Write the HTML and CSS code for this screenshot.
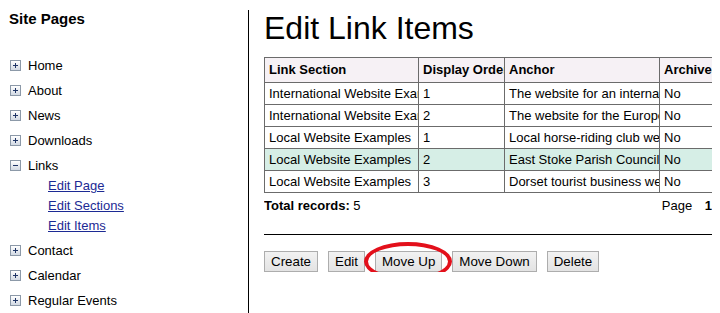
FILE: index.html
```html
<!DOCTYPE html>
<html lang="en">
<head>
    <meta charset="UTF-8">
    <title>Edit Link Items</title>
    <link rel="stylesheet" href="styles.css">
</head>
<body>
    <div class="page">
        <div class="sidebar">
            <div class="sidebar-title">Site Pages</div>
            <ul class="menu">
                <li><span class="toggle plus"></span>Home</li>
                <li><span class="toggle plus"></span>About</li>
                <li><span class="toggle plus"></span>News</li>
                <li><span class="toggle plus"></span>Downloads</li>
                <li><span class="toggle minus"></span>Links
                    <ul class="submenu">
                        <li><a href="#">Edit Page</a></li>
                        <li><a href="#">Edit Sections</a></li>
                        <li><a href="#">Edit Items</a></li>
                    </ul>
                </li>
                <li><span class="toggle plus"></span>Contact</li>
                <li><span class="toggle plus"></span>Calendar</li>
                <li><span class="toggle plus"></span>Regular Events</li>
            </ul>
        </div>

        <div class="main">
            <h1 class="title">Edit Link Items</h1>
            <table class="grid">
                <colgroup>
                    <col class="col-section">
                    <col class="col-order">
                    <col class="col-anchor">
                    <col class="col-archive">
                </colgroup>
                <tr class="head">
                    <th>Link Section</th>
                    <th>Display Order</th>
                    <th>Anchor</th>
                    <th>Archived</th>
                </tr>
                <tr>
                    <td>International Website Examples</td>
                    <td>1</td>
                    <td>The website for an international charity</td>
                    <td>No</td>
                </tr>
                <tr>
                    <td>International Website Examples</td>
                    <td>2</td>
                    <td>The website for the European federation</td>
                    <td>No</td>
                </tr>
                <tr>
                    <td>Local Website Examples</td>
                    <td>1</td>
                    <td>Local horse-riding club website</td>
                    <td>No</td>
                </tr>
                <tr class="selected">
                    <td>Local Website Examples</td>
                    <td>2</td>
                    <td>East Stoke Parish Council</td>
                    <td>No</td>
                </tr>
                <tr>
                    <td>Local Website Examples</td>
                    <td>3</td>
                    <td>Dorset tourist business website</td>
                    <td>No</td>
                </tr>
            </table>

            <div class="pager">
                <div><b>Total records:</b> 5</div>
                <div class="page-no">Page <b>1</b></div>
            </div>

            <hr class="rule">

            <div class="actions">
                <button class="btn">Create</button>
                <button class="btn">Edit</button>
                <span class="marked"><button class="btn">Move Up</button></span>
                <button class="btn">Move Down</button>
                <button class="btn">Delete</button>
            </div>
        </div>
    </div>
</body>
</html>
```

FILE: styles.css
```css
body {
    margin: 0;
    font-family: "Liberation Sans", Arial, sans-serif;
    font-size: 13px;
    color: #000;
    background: #fff;
    overflow: hidden;
}
.page {
    display: flex;
    align-items: flex-start;
}
.sidebar {
    width: 239px;
    padding-left: 9px;
    margin-top: 10px;
    min-height: 303px;
    border-right: 1px solid #000;
}
.sidebar-title {
    font-weight: bold;
    font-size: 15px;
    line-height: 17px;
}
.menu {
    list-style: none;
    margin: 29px 0 0 0;
    padding: 0;
}
.menu > li {
    line-height: 20px;
    margin-bottom: 5px;
}
.toggle {
    display: inline-block;
    width: 9px;
    height: 9px;
    border: 1px solid #8c99a8;
    background: linear-gradient(#ffffff, #d2d9e3);
    margin: 0 7px 0 1px;
    vertical-align: -1px;
    position: relative;
}
.toggle::before {
    content: "";
    position: absolute;
    left: 2px;
    top: 4px;
    width: 5px;
    height: 1px;
    background: #1f3566;
}
.toggle.plus::after {
    content: "";
    position: absolute;
    left: 4px;
    top: 2px;
    width: 1px;
    height: 5px;
    background: #1f3566;
}
.submenu {
    list-style: none;
    margin: 0;
    padding: 0 0 0 39px;
}
.submenu li {
    line-height: 20px;
}
.submenu a {
    color: #1c2a94;
    text-decoration: underline;
}
.main {
    width: 448px;
    margin-left: 15px;
    overflow: hidden;
}
.title {
    margin: 10px 0 10px 0;
    font-size: 32px;
    font-weight: normal;
    line-height: 37px;
    white-space: nowrap;
}
.grid {
    border-collapse: collapse;
    table-layout: fixed;
    width: 555px;
}
.col-section { width: 154px; }
.col-order { width: 86px; }
.col-anchor { width: 155px; }
.col-archive { width: 160px; }
.grid th,
.grid td {
    border: 1px solid #6b6b6b;
    padding: 0 4px;
    text-align: left;
    white-space: nowrap;
    overflow: hidden;
    line-height: 21px;
}
.grid th {
    background: #f6f1f5;
    line-height: 24px;
}
.grid .selected td {
    background: #d6eee6;
}
.pager {
    display: flex;
    justify-content: space-between;
    margin-top: 5px;
    line-height: 16px;
}
.page-no b {
    margin-left: 9px;
}
.rule {
    border: 0;
    border-top: 1px solid #000;
    margin: 20px 0 16px 0;
}
.actions {
    display: flex;
    gap: 10px;
    align-items: flex-start;
}
.btn {
    font-family: "Liberation Sans", Arial, sans-serif;
    font-size: 13.33px;
    line-height: 15px;
    padding: 2px 6px;
    color: #000;
    border: 1px solid #adadad;
    background: linear-gradient(#f2f2f2, #e3e3e3);
    border-radius: 0;
}
.marked {
    position: relative;
    display: inline-block;
}
.marked::after {
    content: "";
    position: absolute;
    left: -11px;
    top: -9px;
    width: 80px;
    height: 31px;
    border: 4px solid #e3101b;
    border-radius: 50%;
    pointer-events: none;
}
```
